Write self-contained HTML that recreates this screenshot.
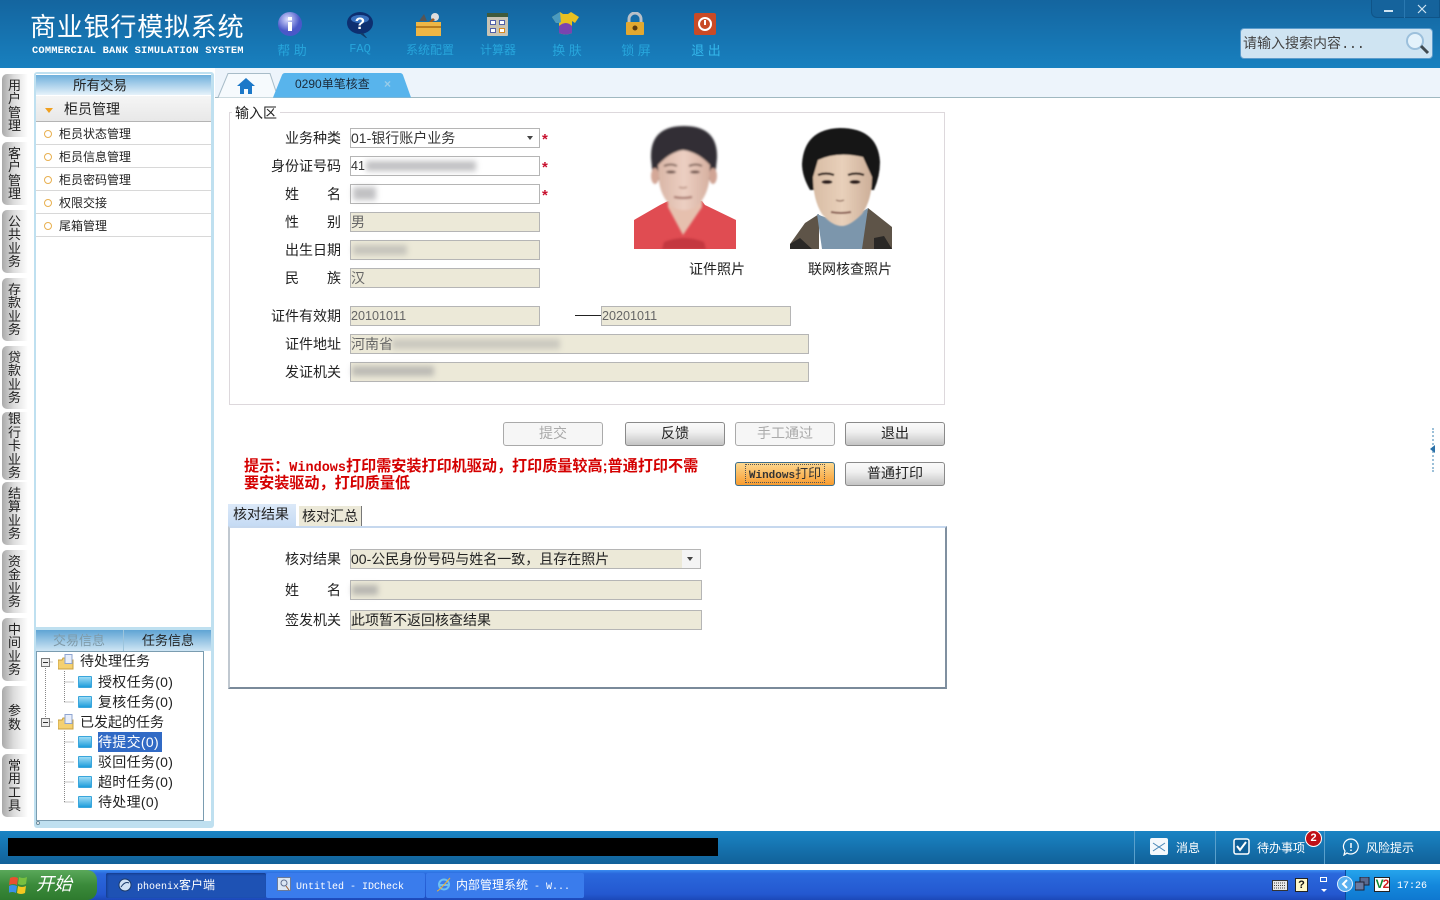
<!DOCTYPE html>
<html><head><meta charset="utf-8"><title>商业银行模拟系统</title>
<style>
*{box-sizing:border-box}
html,body{margin:0;padding:0;width:1440px;height:900px;overflow:hidden;background:#fff;font-family:"Liberation Sans","WenQuanYi Zen Hei","Noto Sans CJK SC",sans-serif;font-size:14px;color:#222}
.a{position:absolute;white-space:nowrap}
#hd{left:0;top:0;width:1440px;height:68px;background:linear-gradient(#14659f,#1880bf)}
.nav{color:#27a6dc;font-size:13px;text-align:center;width:70px;top:40px}
.nav.s{font-size:12px;top:41px}
.ico{top:11px}
.vt{position:absolute;left:2px;width:26px;background:linear-gradient(90deg,#a9a9a9,#dcdcdc 45%,#fff);border-radius:5px 0 0 5px;font-size:13px;line-height:13.5px;text-align:center;color:#222;display:flex;flex-direction:column;justify-content:center;white-space:normal;padding-right:1px}
.vt span{display:block;height:13.5px}
.menu{left:36px;width:175px;height:23px;border-bottom:1px solid #d8d8d8;font-size:12px;line-height:24px;padding-left:23px;color:#222}
.menu:before{content:"";position:absolute;left:8px;top:8px;width:6px;height:6px;border:1px solid #e8b050;border-radius:50%;background:#fff}
.lb{font-size:14px;line-height:20px;text-align:right;color:#222;left:240px;width:101px}
.lb i{font-style:normal;margin-right:28px}
.in{height:20px;border:1px solid #b5b5b5;background:#fff;font-size:14px;line-height:18px;padding-left:0;color:#333;overflow:hidden}
.dis{background:#ece9d8;color:#666}
.blur{position:absolute;background:#8e8e92;filter:blur(3px);opacity:.55;height:10px}
.star{color:#c8102e;font-size:15px;font-weight:bold;line-height:20px}
.btn{width:100px;height:24px;border:1px solid #8a8a8a;border-radius:3px;background:linear-gradient(#fafafa,#f0f0f0 40%,#c4c4c4);font-size:14px;line-height:20px;text-align:center;color:#222}
.btn.off{color:#aaa;background:#f6f6f6;border-color:#aaa}
.tree{font-size:14px;line-height:20px;color:#222}
.tree.c{letter-spacing:.3px}
.fold{width:14px;height:12px;background:linear-gradient(#9fdcf5,#1f9ddb);border:1px solid #3aa6dc;border-radius:1px}
.box{left:41px;width:9px;height:9px;border:1px solid #777;background:#eee;font-size:0}
.box:after{content:"";position:absolute;left:1px;top:3px;width:5px;height:1px;background:#333}
.tb{top:873px;height:25px;color:#fff;font-size:12px;line-height:25px;border-radius:2px}
.tb b{font:10px "Liberation Mono",monospace}
</style></head><body>

<div class="a" id="hd"></div>
<div class="a" style="left:30px;top:11px;font-size:26px;line-height:32px;color:#fff;letter-spacing:.8px;font-weight:400">商业银行模拟系统</div>
<div class="a" style="left:32px;top:44px;font:bold 10.4px/14px 'Liberation Mono',monospace;color:#fff;letter-spacing:.18px">COMMERCIAL BANK SIMULATION SYSTEM</div>

<svg class="a ico" style="left:277px" width="26" height="26" viewBox="0 0 26 26"><defs><radialGradient id="g1" cx=".4" cy=".3"><stop offset="0" stop-color="#d8dcff"/><stop offset="1" stop-color="#4a58c8"/></radialGradient></defs><circle cx="13" cy="13" r="12" fill="url(#g1)"/><rect x="11" y="11" width="4" height="9" fill="#fff"/><rect x="11" y="6" width="4" height="3.4" fill="#fff"/></svg>
<svg class="a ico" style="left:346px" width="28" height="28" viewBox="0 0 28 28"><ellipse cx="14" cy="12" rx="13" ry="11" fill="#0d2f70"/><ellipse cx="14" cy="8" rx="9" ry="4" fill="#4a8ce0" opacity=".7"/><path d="M17 22l4 5-1 0-7-5z" fill="#123a66"/><text x="14" y="18" font-size="17" font-weight="bold" text-anchor="middle" fill="#fff" font-family="Liberation Sans">?</text></svg>
<svg class="a ico" style="left:415px" width="27" height="26" viewBox="0 0 27 26"><rect x="1" y="11" width="25" height="14" fill="#eeb645"/><rect x="1" y="15" width="25" height="2" fill="#b87d20"/><path d="M4 10l5-7 3 7z" fill="#555"/><circle cx="20" cy="6" r="4" fill="#ddd"/><path d="M14 11l4-4 2 2-3 2z" fill="#a05a20"/></svg>
<svg class="a ico" style="left:487px;top:13px" width="21" height="23" viewBox="0 0 21 23"><rect width="21" height="23" rx="1" fill="#c9c4b4"/><rect width="21" height="4" fill="#3f5a3c"/><g fill="#fff" stroke="#5060a8"><rect x="3.500" y="7.500" width="5" height="4"/><rect x="12.500" y="7.500" width="5" height="4"/><rect x="3.500" y="15.500" width="5" height="4"/><rect x="12.500" y="15.500" width="5" height="4" stroke="#d88a20"/></g></svg>
<svg class="a ico" style="left:552px;top:12px" width="27" height="23" viewBox="0 0 27 23"><path d="M0 5L8 0l3 2 5 0 3-2 8 5-4 6-3-2v12q-6 3-13 0V9l-3 2z" fill="#e8c020"/><path d="M0 5L8 0l1 10-2 1-3 0z" fill="#4a9ac0"/><path d="M7 14q7-6 13 0v7q-6 3-13 0z" fill="#7a44b0"/></svg>
<svg class="a ico" style="left:625px;top:12px" width="20" height="24" viewBox="0 0 20 24"><path d="M4 11V7a6 6 0 0 1 12 0v4" fill="none" stroke="#b8c0c8" stroke-width="3"/><rect x="1" y="10" width="18" height="13" rx="1" fill="#e2a830"/><circle cx="10" cy="16" r="2.500" fill="#5a3a10"/></svg>
<svg class="a ico" style="left:694px;top:13px" width="22" height="22" viewBox="0 0 22 22"><rect width="22" height="22" rx="2" fill="#c94a26"/><circle cx="11" cy="11" r="6" fill="none" stroke="#fff" stroke-width="2"/><rect x="10" y="7" width="2" height="5" fill="#fff"/></svg>

<div class="a nav" style="left:257px">帮 助</div>
<div class="a nav" style="left:325px;font:12px/16px 'Liberation Mono',monospace;top:41px">FAQ</div>
<div class="a nav s" style="left:395px">系统配置</div>
<div class="a nav s" style="left:463px">计算器</div>
<div class="a nav" style="left:532px">换 肤</div>
<div class="a nav" style="left:601px">锁 屏</div>
<div class="a nav" style="left:671px;color:#35b8ec">退 出</div>

<div class="a" style="left:1371px;top:0;width:69px;height:18px;background:#15639c;border:1px solid #0f5488;border-top:0;border-radius:0 0 0 6px"></div>
<div class="a" style="left:1404px;top:0;width:1px;height:18px;background:#2a78b0"></div>
<div class="a" style="left:1384px;top:10px;width:9px;height:2px;background:#cfe4f2"></div>
<svg class="a" style="left:1417px;top:4px" width="10" height="10"><path d="M1 1l8 8M9 1l-8 8" stroke="#cfe4f2" stroke-width="1.200"/></svg>
<div class="a" style="left:1240px;top:28px;width:193px;height:31px;background:#cfe4f2;border:1px solid #5c9ccc;border-radius:4px;font-size:14px;line-height:28px;padding-left:2px;color:#444">请输入搜索内容<span style="letter-spacing:-.6px;font-family:'Liberation Mono'">...</span></div>
<svg class="a" style="left:1405px;top:31px" width="26" height="24" viewBox="0 0 26 24"><circle cx="10" cy="10" r="8" fill="#e4f2fb" stroke="#9cc0dc" stroke-width="2"/><path d="M16 15l7 7" stroke="#404a50" stroke-width="3"/></svg>

<div class="a" style="left:0;top:68px;width:1440px;height:763px;background:#fff"></div>
<div class="a" style="left:215px;top:68px;width:1225px;height:30px;background:#edf4fb"></div>
<div class="a" style="left:215px;top:97px;width:1225px;height:1px;background:#a0b8c0"></div>

<!-- side tabs -->
<div class="vt" style="top:74px;height:63px"><span>用</span><span>户</span><span>管</span><span>理</span></div>
<div class="vt" style="top:142px;height:63px"><span>客</span><span>户</span><span>管</span><span>理</span></div>
<div class="vt" style="top:210px;height:63px"><span>公</span><span>共</span><span>业</span><span>务</span></div>
<div class="vt" style="top:278px;height:63px"><span>存</span><span>款</span><span>业</span><span>务</span></div>
<div class="vt" style="top:346px;height:63px"><span>贷</span><span>款</span><span>业</span><span>务</span></div>
<div class="vt" style="top:412px;height:68px"><span>银</span><span>行</span><span>卡</span><span>业</span><span>务</span></div>
<div class="vt" style="top:482px;height:63px"><span>结</span><span>算</span><span>业</span><span>务</span></div>
<div class="vt" style="top:550px;height:63px"><span>资</span><span>金</span><span>业</span><span>务</span></div>
<div class="vt" style="top:618px;height:63px"><span>中</span><span>间</span><span>业</span><span>务</span></div>
<div class="vt" style="top:686px;height:63px"><span>参</span><span>数</span></div>
<div class="vt" style="top:754px;height:63px"><span>常</span><span>用</span><span>工</span><span>具</span></div>

<!-- left panel -->
<div class="a" style="left:34px;top:72px;width:180px;height:756px;background:#bfe0f0;border-radius:3px"></div>
<div class="a" style="left:36px;top:74px;width:175px;height:553px;background:#fff"></div>
<div class="a" style="left:36px;top:75px;width:175px;height:20px;background:linear-gradient(#6fb0dc,#e6f2fa);font-size:13.500px;line-height:22px;padding-left:37px">所有交易</div>
<div class="a" style="left:36px;top:96px;width:175px;height:26px;background:linear-gradient(#f5f5f5,#e8e8e8);border-bottom:1px solid #b4b4b4;font-size:14px;line-height:27px;padding-left:28px">柜员管理</div>
<div class="a" style="left:45px;top:108px;border:4px solid transparent;border-top:5px solid #f0a020;border-bottom:0"></div>
<div class="a menu" style="top:122px">柜员状态管理</div>
<div class="a menu" style="top:145px">柜员信息管理</div>
<div class="a menu" style="top:168px">柜员密码管理</div>
<div class="a menu" style="top:191px">权限交接</div>
<div class="a menu" style="top:214px">尾箱管理</div>

<div class="a" style="left:36px;top:630px;width:175px;height:21px;background:linear-gradient(#5fa4d4,#cfe6f4)"></div>
<div class="a" style="left:123px;top:630px;width:1px;height:21px;background:#9cc4dc"></div>
<div class="a" style="left:53px;top:632px;font-size:13px;line-height:18px;color:#7f9aa8">交易信息</div>
<div class="a" style="left:142px;top:632px;font-size:13px;line-height:18px;color:#222">任务信息</div>
<div class="a" style="left:36px;top:651px;width:168px;height:170px;background:#fff;border:1px solid #7a9cb0"></div>
<div class="a" style="left:204px;top:651px;width:7px;height:170px;background:#fff"></div>
<div class="a" style="left:36px;top:821px;width:4px;height:4px;border:1px solid #6a8a9a;border-radius:50%;background:#fff"></div>

<svg class="a" style="left:36px;top:651px" width="60" height="160"><g stroke="#888" stroke-dasharray="1 1" fill="none"><path d="M9.500 15v56M9.500 11h8M28.500 20v32M28.500 31h10M28.500 51h10M9.500 71h8M28.500 80v72M28.500 91h10M28.500 111h10M28.500 131h10M28.500 151h10"/></g></svg>
<div class="a box" style="top:658px"></div><div class="a box" style="top:718px"></div>
<svg class="a" style="left:58px;top:654px" width="16" height="16"><path d="M0 6h4l1-2h5v2h5v9H0z" fill="#f4d070" stroke="#c8a040"/><rect x="7" y="0.500" width="7" height="9" fill="#e8eefa" stroke="#8ea4d0"/></svg>
<svg class="a" style="left:58px;top:714px" width="16" height="16"><path d="M0 6h4l1-2h5v2h5v9H0z" fill="#f4d070" stroke="#c8a040"/><rect x="7" y="0.500" width="7" height="9" fill="#e8eefa" stroke="#8ea4d0"/></svg>
<div class="a fold" style="left:78px;top:676px"></div>
<div class="a fold" style="left:78px;top:696px"></div>
<div class="a fold" style="left:78px;top:736px"></div>
<div class="a fold" style="left:78px;top:756px"></div>
<div class="a fold" style="left:78px;top:776px"></div>
<div class="a fold" style="left:78px;top:796px"></div>
<div class="a" style="left:98px;top:732px;width:64px;height:20px;background:#316ac5"></div>
<div class="a tree" style="left:80px;top:651px">待处理任务</div>
<div class="a tree c" style="left:98px;top:672px">授权任务(0)</div>
<div class="a tree c" style="left:98px;top:692px">复核任务(0)</div>
<div class="a tree" style="left:80px;top:712px">已发起的任务</div>
<div class="a tree c" style="left:98px;top:732px;color:#fff">待提交(0)</div>
<div class="a tree c" style="left:98px;top:752px">驳回任务(0)</div>
<div class="a tree c" style="left:98px;top:772px">超时任务(0)</div>
<div class="a tree c" style="left:98px;top:792px">待处理(0)</div>

<!-- tabs -->
<svg class="a" style="left:217px;top:72px" width="200" height="27"><path d="M1 25.500L11 1.500h42l8 24" fill="#f6fafd" stroke="#a8bcc8"/><path d="M56 25.500L65 3q1-2 3-2h115q2 0 3 2l8 22.500z" fill="#58b4ec"/></svg>
<svg class="a" style="left:237px;top:78px" width="18" height="16" viewBox="0 0 18 16"><path d="M9 0L0 8h3v8h4v-5h4v5h4V8h3z" fill="#1c78c8"/></svg>
<div class="a" style="left:295px;top:75px;font-size:12px;line-height:18px;color:#1a2a3a">0290单笔核查</div>
<div class="a" style="left:384px;top:76px;font-size:12px;line-height:16px;color:#98cdea;font-weight:bold">×</div>

<!-- fieldset -->
<div class="a" style="left:229px;top:112px;width:716px;height:293px;border:1px solid #ddd8dc"></div>
<div class="a" style="left:232px;top:104px;background:#fff;padding:0 3px;font-size:14px;line-height:19px">输入区</div>

<div class="a lb" style="top:128px">业务种类</div>
<div class="a lb" style="top:156px">身份证号码</div>
<div class="a lb" style="top:184px"><i>姓</i>名</div>
<div class="a lb" style="top:212px"><i>性</i>别</div>
<div class="a lb" style="top:240px">出生日期</div>
<div class="a lb" style="top:268px"><i>民</i>族</div>
<div class="a lb" style="top:306px">证件有效期</div>
<div class="a lb" style="top:334px">证件地址</div>
<div class="a lb" style="top:362px">发证机关</div>

<div class="a in" style="left:350px;top:128px;width:190px">01-银行账户业务</div>
<div class="a" style="left:527px;top:136px;border:3px solid transparent;border-top:4px solid #444;border-bottom:0"></div>
<div class="a in" style="left:350px;top:156px;width:190px;font-size:12.500px">41</div>
<div class="blur" style="left:366px;top:161px;width:110px"></div>
<div class="a in" style="left:350px;top:184px;width:190px"></div>
<div class="blur" style="left:353px;top:187px;width:23px;height:13px"></div>
<div class="a in dis" style="left:350px;top:212px;width:190px">男</div>
<div class="a in dis" style="left:350px;top:240px;width:190px"></div>
<div class="blur" style="left:353px;top:245px;width:54px;opacity:.4"></div>
<div class="a in dis" style="left:350px;top:268px;width:190px">汉</div>
<div class="a in dis" style="left:350px;top:306px;width:190px;font-size:12.600px">20101011</div>
<div class="a" style="left:575px;top:315px;width:26px;height:1px;background:#222"></div>
<div class="a in dis" style="left:601px;top:306px;width:190px;font-size:12.600px">20201011</div>
<div class="a in dis" style="left:350px;top:334px;width:459px">河南省</div>
<div class="blur" style="left:392px;top:339px;width:168px;opacity:.35"></div>
<div class="a in dis" style="left:350px;top:362px;width:459px"></div>
<div class="blur" style="left:352px;top:366px;width:82px;opacity:.5"></div>
<div class="a star" style="left:542px;top:130px">*</div>
<div class="a star" style="left:542px;top:158px">*</div>
<div class="a star" style="left:542px;top:186px">*</div>

<!-- photo 1 -->
<svg class="a" style="left:634px;top:124px" width="102" height="125" viewBox="0 0 102 125">
<defs><filter id="b1" x="-10%" y="-10%" width="120%" height="120%"><feGaussianBlur stdDeviation="1.100"/></filter>
<linearGradient id="f1" x1="0" x2="1"><stop offset="0" stop-color="#d9b6a6"/><stop offset=".5" stop-color="#eccfc2"/><stop offset="1" stop-color="#d6b0a0"/></linearGradient></defs>
<clipPath id="c1"><rect width="102" height="125"/></clipPath>
<g clip-path="url(#c1)">
<path d="M0 96L26 81l8-4h34l3 4 31 15v29H0z" fill="#e04c52"/>
<g filter="url(#b1)">
<path d="M34 70h34v13L49 111 34 83z" fill="#e6c0ae"/>
<path d="M30 118q20-8 40 0l2 7H28z" fill="#c43840"/>
<path d="M17 34Q16 2 50 2q34 0 33 32l-2 20-6 2-50 0-6-2z" fill="#302e34"/>
<ellipse cx="21" cy="52" rx="4" ry="8" fill="#d4a898"/><ellipse cx="79" cy="52" rx="4" ry="8" fill="#d0a494"/>
<path d="M24 41Q36 28 49 26 64 28 76 41L75 58Q72 76 60 84 50 88 40 84 28 76 25 58z" fill="url(#f1)"/>
<path d="M30 42q7-3 13 0M55 42q7-3 13 0" stroke="#6e5248" stroke-width="1.800" fill="none"/>
<ellipse cx="37" cy="48" rx="5" ry="1.500" fill="#6a5048"/><ellipse cx="61" cy="48" rx="5" ry="1.500" fill="#6a5048"/>
<path d="M40 73q9 2 18 0" stroke="#9e6a60" stroke-width="2" fill="none"/>
<path d="M45 63q4 2 8 0" stroke="#b89080" stroke-width="1.500" fill="none"/>
</g></g></svg>

<!-- photo 2 -->
<svg class="a" style="left:790px;top:124px" width="102" height="125" viewBox="0 0 102 125">
<defs><filter id="b2" x="-10%" y="-10%" width="120%" height="120%"><feGaussianBlur stdDeviation=".7"/></filter>
<linearGradient id="f2" x1="0" x2="1"><stop offset="0" stop-color="#d8bca4"/><stop offset=".5" stop-color="#e8d0ba"/><stop offset="1" stop-color="#ccae98"/></linearGradient></defs>
<clipPath id="c2"><rect width="102" height="125"/></clipPath>
<g clip-path="url(#c2)">
<path d="M0 120L15 99l14-9v35H0zM78 84l24 19v22H70z" fill="#5e5448"/>
<path d="M0 120l10-6 12 11H0zM84 114l10-2 8 13H84z" fill="#2a2826"/>
<path d="M27 90q24 12 51-6l-6 41H32z" fill="#7c96ac"/>
<g filter="url(#b2)">
<path d="M12 40Q14 5 50 4q38 0 40 34 0 14-6 28H20Q12 52 12 40z" fill="#161616"/>
<path d="M23 53L28 36Q47 27 73 33L82 53Q82 76 72 90 60 102 52 102 42 102 32 90 23 76 23 53z" fill="url(#f2)"/>
<path d="M28 51q8-3 16 0M58 51q8-3 16 0" stroke="#2a1a14" stroke-width="2.200" fill="none"/>
<ellipse cx="37" cy="58" rx="5.500" ry="2" fill="#2a1e1a"/><ellipse cx="65" cy="58" rx="5.500" ry="2" fill="#2a1e1a"/>
<path d="M46 76q4 2 8 0" stroke="#a08070" stroke-width="1.500" fill="none"/>
<path d="M41 88q10 2 20 0" stroke="#8a6054" stroke-width="2" fill="none"/>
</g></g></svg>
<div class="a" style="left:689px;top:259px;font-size:14px;line-height:20px">证件照片</div>
<div class="a" style="left:808px;top:259px;font-size:14px;line-height:20px">联网核查照片</div>

<!-- buttons -->
<div class="a btn off" style="left:503px;top:422px">提交</div>
<div class="a btn" style="left:625px;top:422px">反馈</div>
<div class="a btn off" style="left:735px;top:422px">手工通过</div>
<div class="a btn" style="left:845px;top:422px">退出</div>
<div class="a btn" style="left:735px;top:462px;background:linear-gradient(#fcd890,#f89c30);border-color:#3c6e8c;font-size:13px;line-height:21px;color:#333"><span style="border:1px dotted #555;padding:1px 3px"><span style="font:bold 11px 'Liberation Mono',monospace">Windows</span>打印</span></div>
<div class="a btn" style="left:845px;top:462px">普通打印</div>
<div class="a" style="left:244px;top:459px;width:460px;color:#d40000;font-size:15.100px;line-height:16px;font-weight:bold">提示：<span style="font:bold 13.500px 'Liberation Mono',monospace">Windows</span>打印需安装打印机驱动，打印质量较高;普通打印不需<br>要安装驱动，打印质量低</div>

<!-- result tabs -->
<div class="a" style="left:228px;top:504px;width:68px;height:23px;background:linear-gradient(#dce9f8,#c4daf4);font-size:14px;line-height:20px;padding-left:5px">核对结果</div>
<div class="a" style="left:298px;top:506px;width:64px;height:20px;background:#ece9d8;border-right:1px solid #777;border-left:1px solid #fff;font-size:14px;line-height:20px;padding-left:3px">核对汇总</div>
<div class="a" style="left:228px;top:526px;width:719px;height:163px;border:2px solid #c6d8ee;border-left-color:#c0c8d0;border-right:2px solid #8090a0;border-bottom:2px solid #7a8a9a;background:#fff"></div>
<div class="a lb" style="top:549px">核对结果</div>
<div class="a lb" style="top:580px"><i>姓</i>名</div>
<div class="a lb" style="top:610px">签发机关</div>
<div class="a in dis" style="left:350px;top:549px;width:351px;color:#222">00-公民身份号码与姓名一致，且存在照片</div>
<div class="a" style="left:682px;top:550px;width:18px;height:18px;background:#f4f4f4"></div>
<div class="a" style="left:687px;top:557px;border:3px solid transparent;border-top:4px solid #444;border-bottom:0"></div>
<div class="a in dis" style="left:350px;top:580px;width:352px"></div>
<div class="blur" style="left:352px;top:585px;width:26px;opacity:.55"></div>
<div class="a in dis" style="left:350px;top:610px;width:352px;color:#222">此项暂不返回核查结果</div>

<!-- right handle -->
<div class="a" style="left:1432px;top:428px;width:3px;height:44px;border-left:2px dotted #9cc0d8"></div>
<div class="a" style="left:1430px;top:445px;border:4px solid transparent;border-right:5px solid #2a70a8;border-left:0"></div>

<!-- status bar -->
<div class="a" style="left:0;top:831px;width:1440px;height:33px;background:linear-gradient(#1a84c4,#116199)"></div>
<div class="a" style="left:8px;top:838px;width:710px;height:18px;background:#000"></div>
<div class="a" style="left:1134px;top:831px;width:1px;height:33px;background:#5aa0cc"></div>
<div class="a" style="left:1215px;top:831px;width:1px;height:33px;background:#5aa0cc"></div>
<div class="a" style="left:1324px;top:831px;width:1px;height:33px;background:#5aa0cc"></div>
<svg class="a" style="left:1150px;top:838px" width="18" height="17"><rect width="18" height="17" rx="2" fill="#f4f8fc"/><path d="M3 5l6 4 6-4M3 13l6-4 6 4" stroke="#4a88b8" fill="none"/></svg>
<div class="a" style="left:1176px;top:839px;font-size:12px;line-height:18px;color:#fff">消息</div>
<svg class="a" style="left:1233px;top:838px" width="17" height="17"><rect x="1" y="1" width="15" height="15" rx="2" fill="#0f5f98" stroke="#fff" stroke-width="1.500"/><path d="M4 8l3 4 6-8" stroke="#fff" stroke-width="2" fill="none"/></svg>
<div class="a" style="left:1257px;top:839px;font-size:12px;line-height:18px;color:#fff">待办事项</div>
<div class="a" style="left:1305px;top:830px;width:17px;height:17px;border-radius:50%;background:#c01018;border:1px solid #fff;color:#fff;font:bold 11px/15px 'Liberation Sans';text-align:center">2</div>
<svg class="a" style="left:1342px;top:838px" width="18" height="18"><path d="M9 1a7.500 7.500 0 1 1-4 14l-3 2 1-4A7.500 7.500 0 0 1 9 1z" fill="none" stroke="#fff" stroke-width="1.200"/><path d="M9 5v5M9 11.500v1.500" stroke="#fff" stroke-width="1.500"/></svg>
<div class="a" style="left:1366px;top:839px;font-size:12px;line-height:18px;color:#fff">风险提示</div>
<div class="a" style="left:0;top:864px;width:1440px;height:6px;background:#fff"></div>

<!-- XP taskbar -->
<div class="a" style="left:0;top:870px;width:1440px;height:30px;background:linear-gradient(#3a8cf0 0,#2a68dc 12%,#2458d0 80%,#1c48b8)"></div>
<div class="a" style="left:1345px;top:870px;width:95px;height:30px;background:linear-gradient(#26a4ec,#1488dc 50%,#0f78d0);border-left:1px solid #0a4a9c"></div>
<div class="a" style="left:0;top:870px;width:97px;height:30px;background:linear-gradient(#5aa85a,#3a8a3a 50%,#2e7a2e);border-radius:0 10px 10px 0"></div>
<svg class="a" style="left:9px;top:876px" width="19" height="18"><path d="M1 2q4-2 8 0l-1 7q-3-2-8 0z" fill="#e85030"/><path d="M10 1q4 2 8 0l-1 7q-4 2-8 0z" fill="#78c040"/><path d="M0 10q3-2 8 0l-1 7q-3-2-8 0z" fill="#3a90e8"/><path d="M9 10q4 2 8 0l-1 7q-4 2-8 0z" fill="#f4c820"/></svg>
<div class="a" style="left:36px;top:872px;font:italic 18px/25px 'Liberation Serif','WenQuanYi Zen Hei',serif;color:#fff">开始</div>
<div class="a tb" style="left:106px;width:160px;background:#1e52b4;padding-left:31px;box-shadow:inset 1px 1px 2px #143a88"><b>phoenix</b>客户端</div>
<div class="a tb" style="left:266px;width:159px;background:#3a7cec;padding-left:30px"><b>Untitled - IDCheck</b></div>
<div class="a tb" style="left:426px;width:158px;background:#3a7cec;padding-left:30px">内部管理系统<b> - W...</b></div>
<svg class="a" style="left:118px;top:878px" width="14" height="14"><circle cx="7" cy="7" r="6" fill="#cfe0f4" stroke="#1a3a6a"/><path d="M3 9q4-6 8-4" stroke="#1a3a6a" fill="none"/></svg>
<svg class="a" style="left:277px;top:877px" width="14" height="14"><rect x=".5" y=".5" width="13" height="13" fill="#dce8f4" stroke="#6a7a9a"/><circle cx="7" cy="6" r="3" fill="none" stroke="#607090"/><path d="M9 9l3 4" stroke="#a06030"/></svg>
<svg class="a" style="left:436px;top:876px" width="16" height="16"><circle cx="8" cy="8.500" r="5" fill="none" stroke="#6cc0f4" stroke-width="2"/><path d="M4 9h8" stroke="#6cc0f4" stroke-width="2"/><path d="M1 15q2 0 13-13" stroke="#f0b030" fill="none"/></svg>

<svg class="a" style="left:1272px;top:880px" width="16" height="11"><rect x=".5" y=".5" width="15" height="10" fill="#e8e8e8" stroke="#333"/><path d="M2 3h12M2 5.500h12M2 8h12" stroke="#444" stroke-dasharray="1 1"/></svg>
<div class="a" style="left:1295px;top:878px;width:13px;height:14px;background:#fff8c8;border:1px solid #222;font:bold 11px/12px 'Liberation Sans';text-align:center;color:#111">?</div>
<div class="a" style="left:1320px;top:877px;width:7px;height:5px;border:1px solid #fff"></div>
<div class="a" style="left:1321px;top:889px;border:3px solid transparent;border-top:3px solid #fff;border-bottom:0"></div>
<svg class="a" style="left:1337px;top:876px" width="16" height="16"><circle cx="8" cy="8" r="7.500" fill="#5ab0f0" stroke="#e0f0ff"/><path d="M10 4L6 8l4 4" stroke="#fff" stroke-width="2" fill="none"/></svg>
<svg class="a" style="left:1355px;top:877px" width="15" height="15"><rect x="5" y="0" width="9" height="8" fill="#5a6a90" stroke="#223"/><rect x="0" y="5" width="9" height="8" fill="#6a7aa0" stroke="#223"/></svg>
<div class="a" style="left:1374px;top:877px;width:16px;height:15px;background:#fff;border:1px solid #222;font:bold 12px/13px 'Liberation Sans';text-align:center;color:#0a8a30;letter-spacing:-1px">V<span style="color:#d02020">2</span></div>
<div class="a" style="left:1397px;top:880px;font:10px/14px 'Liberation Mono',monospace;color:#fff">17:26</div>
</body></html>
